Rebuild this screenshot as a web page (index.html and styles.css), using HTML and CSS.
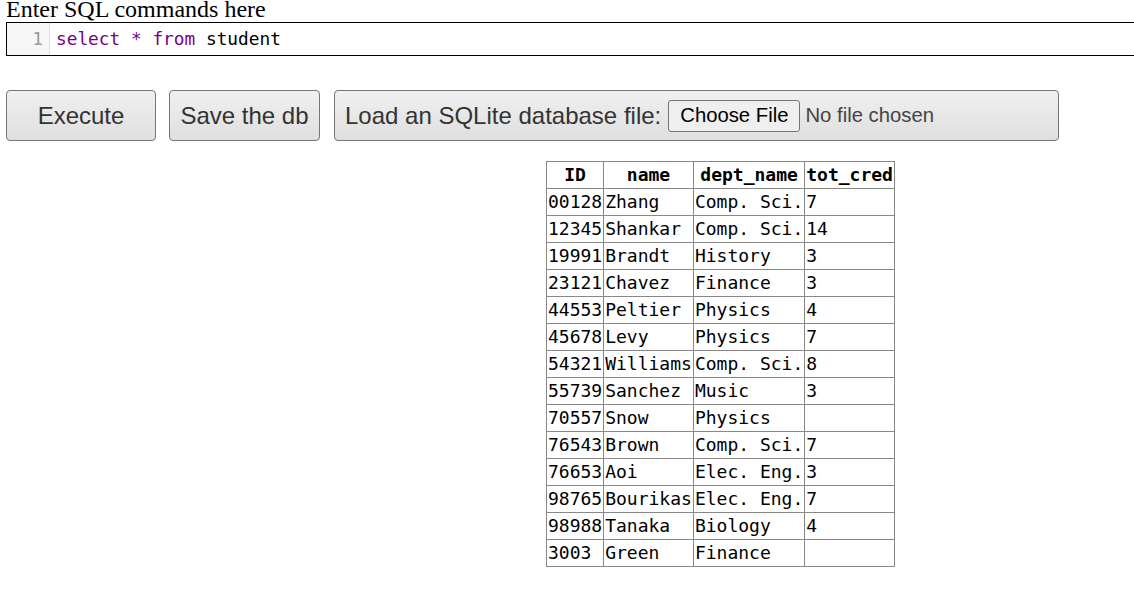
FILE: index.html
```html
<!DOCTYPE html>
<html>
<head>
<meta charset="utf-8">
<link rel="stylesheet" href="styles.css">
</head>
<body>
<div class="title">Enter SQL commands here</div>
<div class="editor">
  <div class="gutter">1</div>
  <div class="code"><span class="kw">select</span> <span class="op">*</span> <span class="kw">from</span> student</div>
</div>
<div class="actions">
  <button class="btn btn-exec">Execute</button>
  <button class="btn btn-save">Save the db</button>
  <label class="btn btn-load">Load an SQLite database file: <span class="file-btn">Choose File</span><span class="file-none">No file chosen</span></label>
</div>
<table class="result">
  <thead>
    <tr><th>ID</th><th>name</th><th>dept_name</th><th>tot_cred</th></tr>
  </thead>
  <tbody>
    <tr><td>00128</td><td>Zhang</td><td>Comp. Sci.</td><td>7</td></tr>
    <tr><td>12345</td><td>Shankar</td><td>Comp. Sci.</td><td>14</td></tr>
    <tr><td>19991</td><td>Brandt</td><td>History</td><td>3</td></tr>
    <tr><td>23121</td><td>Chavez</td><td>Finance</td><td>3</td></tr>
    <tr><td>44553</td><td>Peltier</td><td>Physics</td><td>4</td></tr>
    <tr><td>45678</td><td>Levy</td><td>Physics</td><td>7</td></tr>
    <tr><td>54321</td><td>Williams</td><td>Comp. Sci.</td><td>8</td></tr>
    <tr><td>55739</td><td>Sanchez</td><td>Music</td><td>3</td></tr>
    <tr><td>70557</td><td>Snow</td><td>Physics</td><td></td></tr>
    <tr><td>76543</td><td>Brown</td><td>Comp. Sci.</td><td>7</td></tr>
    <tr><td>76653</td><td>Aoi</td><td>Elec. Eng.</td><td>3</td></tr>
    <tr><td>98765</td><td>Bourikas</td><td>Elec. Eng.</td><td>7</td></tr>
    <tr><td>98988</td><td>Tanaka</td><td>Biology</td><td>4</td></tr>
    <tr><td>3003</td><td>Green</td><td>Finance</td><td></td></tr>
  </tbody>
</table>
</body>
</html>
```
FILE: styles.css
```css
html, body {
  margin: 0;
  padding: 0;
  background: #fff;
  overflow: hidden;
}
body {
  padding: 0 0 0 6px;
  font-family: "Liberation Serif", "Times New Roman", serif;
}
.title {
  font-size: 24px;
  line-height: 22px;
  margin-top: -2px;
  color: #000;
  white-space: nowrap;
}
.editor {
  margin-top: 2px;
  width: 1140px;
  height: 32px;
  border: 1px solid #000;
  display: flex;
  font-family: "DejaVu Sans Mono", "Liberation Mono", monospace;
  font-size: 17.8px;
  line-height: 32px;
}
.gutter {
  width: 36px;
  padding-right: 6px;
  background: #f7f7f7;
  border-right: 1px solid #ddd;
  color: #999;
  text-align: right;
}
.code {
  padding-left: 6px;
  color: #000;
  white-space: pre;
}
.kw, .op { color: #708; }
.actions {
  display: flex;
  gap: 13px;
  margin-top: 34px;
  align-items: center;
}
.btn {
  box-sizing: border-box;
  height: 51px;
  border: 1px solid #767676;
  border-radius: 4px;
  background: linear-gradient(#f0f0f0, #dfdfdf);
  font-family: "Liberation Sans", Arial, sans-serif;
  font-size: 24px;
  color: #333;
  padding: 0 10px;
  display: flex;
  align-items: center;
  justify-content: center;
  margin: 0;
}
.btn-exec { width: 150px; }
.btn-save { width: 151px; }
.btn-load {
  width: 725px;
  margin-left: 1px;
  justify-content: flex-start;
  padding-left: 10px;
}
.file-btn {
  margin-left: 7px;
  box-sizing: border-box;
  height: 32px;
  padding: 0 11px;
  border: 1px solid #767676;
  border-radius: 3px;
  background: #efefef;
  font-size: 20.3px;
  color: #000;
  display: flex;
  align-items: center;
}
.file-none {
  margin-left: 5px;
  font-size: 20.3px;
  color: #444;
}
.result {
  margin: 20px 0 0 540px;
  border-collapse: collapse;
  font-family: "DejaVu Sans Mono", "Liberation Mono", monospace;
  font-size: 18px;
}
.result th, .result td {
  border: 1px solid #888;
  padding: 0 1px;
  height: 26px;
  line-height: 24px;
  text-align: left;
  white-space: nowrap;
}
.result th {
  text-align: center;
  font-weight: bold;
}
```
